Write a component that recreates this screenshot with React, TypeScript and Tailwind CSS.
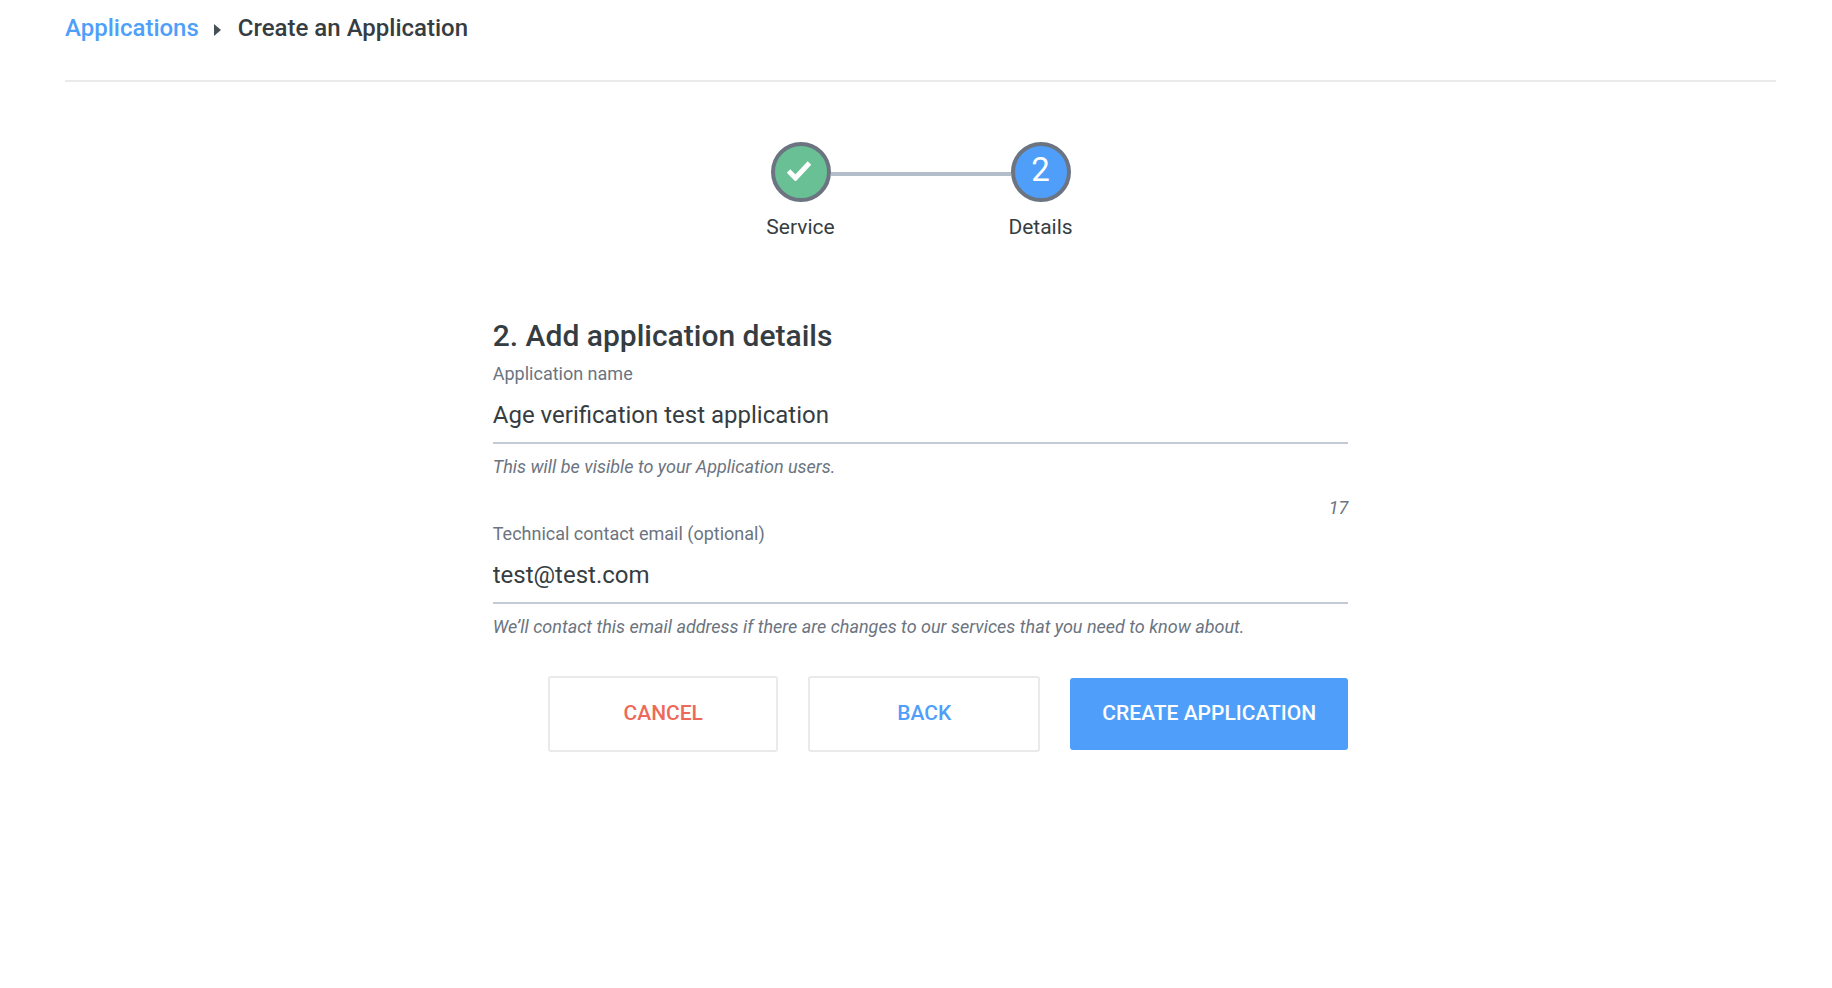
import { useState } from "react";
import type { ReactNode } from "react";

const HINTS = {
    name: "This will be visible to your Application users.",
    email: "We’ll contact this email address if there are changes to our services that you need to know about.",
};

const MAX_NAME_LENGTH = 50;

export default function App() {
    const [name, setName] = useState("Age verification test application");
    const [email, setEmail] = useState("test@test.com");

    return (
        <div className="min-h-screen bg-white pr-14 pl-[65px] font-[Roboto,sans-serif] text-[#363d42]">
            <header className="border-b-2 border-[#eaeaea] pt-3 pb-9">
                <nav aria-label="Breadcrumb" className="flex items-center text-2xl font-medium">
                    <a href="#applications" className="text-[#4f9ffa]">
                        Applications
                    </a>
                    <svg viewBox="0 0 7 12" className="mt-1 mr-[17px] ml-[15px] h-3 w-[7px]" fill="#475056" aria-hidden="true">
                        <path d="M0 0 L7 6 L0 12 Z" />
                    </svg>
                    <span aria-current="page">Create an Application</span>
                </nav>
            </header>

            <main className="mx-auto w-1/2">
                {/* Progress steps */}
                <ol className="mt-[60px] flex justify-center">
                    <Step label="Service" color="bg-[#68c094]">
                        <svg viewBox="0 0 24 20" className="mr-1 mb-0.5 h-5 w-6" fill="none" stroke="white" strokeWidth="5" aria-label="Done">
                            <path d="M1.5 10 L8.5 17 L22.5 2" />
                        </svg>
                    </Step>
                    <li aria-hidden="true" className="mt-[30px] h-1 w-[180px] bg-[#b4bdca]" />
                    <Step label="Details" color="bg-[#4f9ffa]">
                        <span className="pb-1">2</span>
                    </Step>
                </ol>

                <form onSubmit={(e) => e.preventDefault()} className="mt-[75px]">
                    <h1 className="mb-1 text-3xl leading-10 font-medium">2. Add application details</h1>

                    <Field id="name" label="Application name" value={name} hint={HINTS.name} maxLength={MAX_NAME_LENGTH} onChange={setName} />
                    <p className="mt-[17px] text-right text-lg leading-6 text-[#6b7480] italic">{MAX_NAME_LENGTH - name.length}</p>
                    <Field id="email" type="email" label="Technical contact email (optional)" value={email} hint={HINTS.email} onChange={setEmail} />

                    <div className="mt-[37px] flex items-center justify-end gap-[30px]">
                        <button type="button" className="h-[76px] w-[230px] rounded-[3px] border-2 border-[#eaeaea] text-[21px] font-medium text-[#ed6a5a]">
                            CANCEL
                        </button>
                        <button type="button" className="h-[76px] w-[232px] rounded-[3px] border-2 border-[#eaeaea] text-[21px] font-medium text-[#4f9ffa]">
                            BACK
                        </button>
                        <button type="submit" className="h-[72px] w-[278px] rounded-[3px] bg-[#4f9ffa] text-[21px] font-medium text-white">
                            CREATE APPLICATION
                        </button>
                    </div>
                </form>
            </main>
        </div>
    );
}

const Step = ({ label, color, children }: { label: string; color: string; children: ReactNode }) => (
    <li className="flex w-[60px] flex-col items-center">
        <div className={`flex h-[60px] w-[60px] items-center justify-center rounded-full border-4 border-[#6b7480] text-[33px] leading-8 text-white ${color}`}>
            {children}
        </div>
        <span className="mt-[11px] text-[21px] leading-7">{label}</span>
    </li>
);

type FieldProps = {
    id: string;
    label: string;
    value: string;
    hint: string;
    type?: string;
    maxLength?: number;
    onChange: (value: string) => void;
};

const Field = ({ id, label, value, hint, type = "text", maxLength, onChange }: FieldProps) => (
    <div>
        <label htmlFor={id} className="block text-lg leading-7 text-[#6b7480]">
            {label}
        </label>
        <input
            id={id}
            type={type}
            value={value}
            maxLength={maxLength}
            aria-describedby={`${id}-hint`}
            onChange={(e) => onChange(e.target.value)}
            className="block h-14 w-full border-b-2 border-[#c3c9d5] text-2xl outline-none"
        />
        <p id={`${id}-hint`} className="mt-[11px] text-lg leading-6 text-[#6b7480] italic">
            {hint}
        </p>
    </div>
);
